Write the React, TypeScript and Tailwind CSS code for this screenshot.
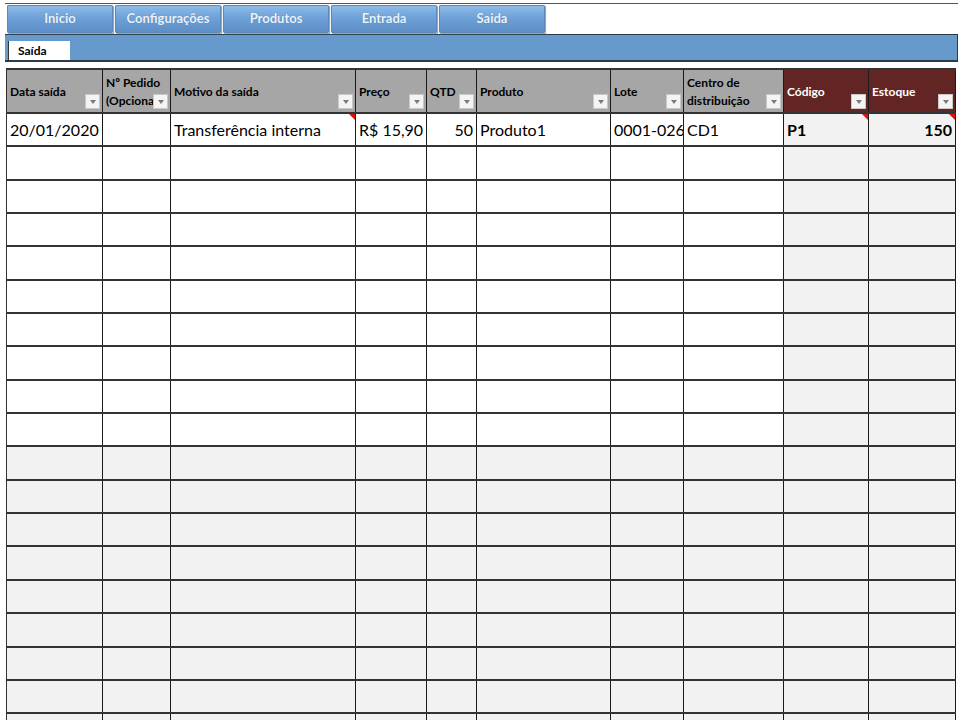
const MENU = ["Inicio", "Configurações", "Produtos", "Entrada", "Saida"];

type Col = {
  key: string;
  label: string[];
  width: string;
  dark?: boolean;
};

const COLUMNS: Col[] = [
  { key: "data", label: ["Data saída"], width: "w-[96px]" },
  { key: "pedido", label: ["Nº Pedido", "(Opcional)"], width: "w-[68px]" },
  { key: "motivo", label: ["Motivo da saída"], width: "w-[185px]" },
  { key: "preco", label: ["Preço"], width: "w-[71px]" },
  { key: "qtd", label: ["QTD"], width: "w-[50px]" },
  { key: "produto", label: ["Produto"], width: "w-[134px]" },
  { key: "lote", label: ["Lote"], width: "w-[73px]" },
  { key: "cd", label: ["Centro de", "distribuição"], width: "w-[100px]" },
  { key: "codigo", label: ["Código"], width: "w-[85px]", dark: true },
  { key: "estoque", label: ["Estoque"], width: "w-[87px]", dark: true },
];

type Cell = { text: string; align?: "right"; bold?: boolean; note?: boolean };

const FIRST_ROW: Record<string, Cell> = {
  data: { text: "20/01/2020" },
  pedido: { text: "" },
  motivo: { text: "Transferência interna", note: true },
  preco: { text: "R$ 15,90" },
  qtd: { text: "50", align: "right" },
  produto: { text: "Produto1" },
  lote: { text: "0001-026" },
  cd: { text: "CD1" },
  codigo: { text: "P1", bold: true, note: true },
  estoque: { text: "150", align: "right", bold: true, note: true },
};

const ROW_COUNT = 19;

function FilterButton() {
  return (
    <div className="absolute right-[2px] bottom-[3px] w-[15px] h-[15px] bg-[#f4f4f4] border border-[#c8c8c8] flex items-center justify-center">
      <div className="w-0 h-0 border-l-[3.5px] border-r-[3.5px] border-t-[4px] border-l-transparent border-r-transparent border-t-[#7a7a7a]" />
    </div>
  );
}

function NoteMark() {
  return (
    <div className="absolute top-0 right-0 w-0 h-0 border-l-[6px] border-l-transparent border-t-[6px] border-t-[#e01010]" />
  );
}

export default function App() {
  return (
    <div className="w-[960px] h-[720px] overflow-hidden bg-white font-['Lato',sans-serif] text-black">
      {/* nav buttons */}
      <div className="ml-[5px] mt-[3px] w-[953px] border-t border-[#555]">
        <div className="flex gap-[2px] pl-[2px] pt-px">
          {MENU.map((m) => (
            <div
              key={m}
              className="w-[106px] h-[28px] flex items-center justify-center rounded-[1px] border border-[#5c89bb] bg-gradient-to-b from-[#8dbbe8] via-[#6c9fd6] to-[#5d8fc6] shadow-[1px_1px_1px_#9a9a9a] text-[13px] font-bold text-[#eaf2fb] [text-shadow:0_0_1px_#4a79ad]"
            >
              {m}
            </div>
          ))}
        </div>
      </div>

      {/* sheet tab strip */}
      <div className="ml-[5px] mt-px w-[953px] h-[28px] bg-[#6699cc] border-t border-b-2 border-r border-[#2c3a4a] flex items-end pl-[3px]">
        <div className="w-[62px] h-[19px] bg-white border-l border-[#333] pl-[9px] text-[12px] font-bold leading-[19px]">
          Saída
        </div>
      </div>

      {/* table */}
      <div className="ml-[6px] mt-[6px] w-[950px] border-t-2 border-l border-[#333]">
        <div className="flex h-[44px] border-b-2 border-[#333]">
          {COLUMNS.map((c) => (
            <div
              key={c.key}
              className={`${c.width} relative shrink-0 border-r border-[#1a1a1a] flex items-center overflow-hidden pl-[3px] pr-[4px] text-[12px] font-bold leading-[18px] whitespace-nowrap ${
                c.dark ? "bg-[#632523] text-white" : "bg-[#a6a6a6] text-black"
              }`}
            >
              <div className={c.label.length > 1 ? "mt-[1px]" : "mt-[1px]"}>
                {c.label.map((l) => (
                  <div key={l}>{l}</div>
                ))}
              </div>
              <FilterButton />
            </div>
          ))}
        </div>

        {Array.from({ length: ROW_COUNT }).map((_, i) => (
          <div key={i} className="flex h-[33.35px] border-b-2 border-[#333]">
            {COLUMNS.map((c) => {
              const cell = i === 0 ? FIRST_ROW[c.key] : undefined;
              const shaded = c.dark || i >= 10;
              return (
                <div
                  key={c.key}
                  className={`${c.width} relative shrink-0 border-r border-[#1a1a1a] flex items-center overflow-hidden whitespace-nowrap px-[3px] text-[16px] ${
                    shaded ? "bg-[#f2f2f2]" : "bg-white"
                  } ${cell?.align === "right" ? "justify-end" : ""} ${cell?.bold ? "font-bold" : ""}`}
                >
                  {cell?.text}
                  {cell?.note && <NoteMark />}
                </div>
              );
            })}
          </div>
        ))}
      </div>
    </div>
  );
}
